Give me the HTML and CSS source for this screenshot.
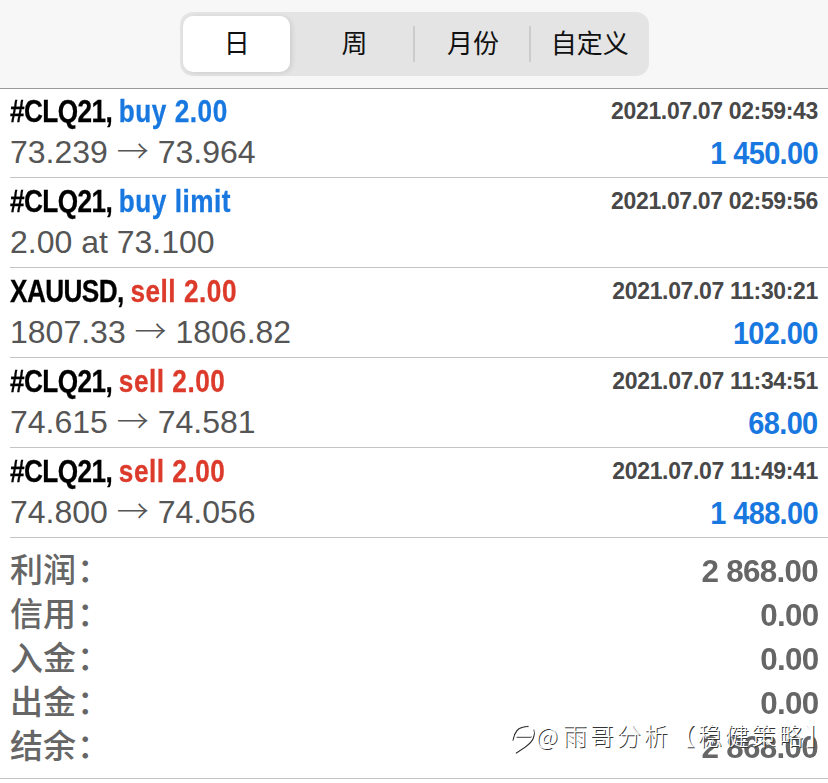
FILE: index.html
```html
<!DOCTYPE html>
<html lang="zh">
<head>
<meta charset="utf-8">
<title>History</title>
<link rel="stylesheet" href="styles.css">
</head>
<body>
<div class="page">
  <header class="topbar">
    <div class="segments">
      <div class="seg seg-day active">日</div>
      <div class="seg seg-week">周</div>
      <div class="seg seg-month">月份</div>
      <div class="seg seg-custom">自定义</div>
    </div>
  </header>
  <main class="list">
    <div class="row">
      <div class="line1"><span class="sym">#CLQ21, <span class="blue">buy 2.00</span></span><span class="time">2021.07.07 02:59:43</span></div>
      <div class="line2"><span class="price">73.239 <span class="arrow">→</span> 73.964</span><span class="pl">1 450.00</span></div>
    </div>
    <div class="row">
      <div class="line1"><span class="sym">#CLQ21, <span class="blue">buy limit</span></span><span class="time">2021.07.07 02:59:56</span></div>
      <div class="line2"><span class="price">2.00 at 73.100</span></div>
    </div>
    <div class="row">
      <div class="line1"><span class="sym">XAUUSD, <span class="red">sell 2.00</span></span><span class="time">2021.07.07 11:30:21</span></div>
      <div class="line2"><span class="price">1807.33 <span class="arrow">→</span> 1806.82</span><span class="pl">102.00</span></div>
    </div>
    <div class="row">
      <div class="line1"><span class="sym">#CLQ21, <span class="red">sell 2.00</span></span><span class="time">2021.07.07 11:34:51</span></div>
      <div class="line2"><span class="price">74.615 <span class="arrow">→</span> 74.581</span><span class="pl">68.00</span></div>
    </div>
    <div class="row">
      <div class="line1"><span class="sym">#CLQ21, <span class="red">sell 2.00</span></span><span class="time">2021.07.07 11:49:41</span></div>
      <div class="line2"><span class="price">74.800 <span class="arrow">→</span> 74.056</span><span class="pl">1 488.00</span></div>
    </div>
    <section class="summary">
      <div class="sum"><span class="label">利润<span class="colon">：</span></span><span class="value">2 868.00</span></div>
      <div class="sum"><span class="label">信用<span class="colon">：</span></span><span class="value">0.00</span></div>
      <div class="sum"><span class="label">入金<span class="colon">：</span></span><span class="value">0.00</span></div>
      <div class="sum"><span class="label">出金<span class="colon">：</span></span><span class="value">0.00</span></div>
      <div class="sum"><span class="label">结余<span class="colon">：</span></span><span class="value">2 868.00</span></div>
    </section>
  </main>
  <div class="watermark">
    <svg class="wm-icon" width="28" height="32" viewBox="0 0 28 32" fill="none" stroke="#fff" stroke-width="1.3" stroke-linecap="round">
      <path d="M4 20C5 14 8 8 14 7c2-.4 4-.6 5-.5"/>
      <path d="M8 17h15"/>
      <path d="M24.7 10c1 3 1 5-.4 8-1 3-4 6-8 9-3 2-6 4-9 6"/>
    </svg>
    <span class="wm-text"><span class="wm-at">@</span>雨哥分析【稳健策略<span class="wm-end">】</span></span>
  </div>
</div>
</body>
</html>
```
FILE: styles.css
```css
* { box-sizing: border-box; }
html, body { margin: 0; padding: 0; background: #fff; }
body { font-family: "Liberation Sans", "Noto Sans CJK SC", sans-serif; }
.page { position: relative; width: 828px; height: 783px; overflow: hidden; }

.topbar { height: 89px; background: #f7f7f7; border-bottom: 1px solid #999; padding: 12px 0 0 180px; }
.segments { display: flex; align-items: center; width: 469px; height: 64px; padding: 0 3px; background: #e4e4e4; border-radius: 13px; }
.seg { display: flex; align-items: center; justify-content: center; height: 36px; padding-bottom: 5px; font: 400 26px "Noto Sans CJK SC", sans-serif; color: #111; }
.seg-day { width: 108px; height: 56px; background: #fff; border-radius: 10px; box-shadow: 2px 1px 5px rgba(0,0,0,.1); }
.seg-week { width: 125px; padding-left: 6px; border-right: 2px solid #ccc; }
.seg-month { width: 117px; padding-left: 3px; border-right: 2px solid #ccc; }
.seg-custom { width: 116px; padding-left: 3px; }

.row { height: 90px; padding: 1px 10px 0 0; margin-left: 10px; border-bottom: 1px solid #c4c4c4; }
.row:first-child { height: 89px; padding-top: 0; }
.line1, .line2 { display: flex; justify-content: space-between; }
.line1 { height: 45px; align-items: center; }
.line2 { height: 43px; align-items: baseline; }
.sym { display: inline-block; font-weight: 700; font-size: 31px; white-space: nowrap; letter-spacing: -.7px; color: #000; -webkit-text-stroke: .3px currentColor; transform: scaleX(.845); transform-origin: left center; }
.blue, .red { letter-spacing: .6px; }
.blue { color: #1878e0; }
.red { color: #dc3a2a; }
.time { font-weight: 700; font-size: 23px; letter-spacing: -.35px; color: #484848; }
.price { font-size: 32px; color: #555; }
.arrow { font-family: "Noto Sans CJK SC", sans-serif; font-weight: 300; line-height: 0; }
.pl { display: inline-block; font-weight: 700; font-size: 32px; white-space: nowrap; letter-spacing: -.7px; color: #1878e0; transform: translateY(1px) scaleX(.905); transform-origin: right center; }

.summary { padding: 11px 10px 0; height: 241px; border-bottom: 1px solid #c4c4c4; }
.sum { display: flex; justify-content: space-between; align-items: center; height: 44px; }
.label { padding-bottom: 6px; font: 500 33px "Noto Sans CJK SC", sans-serif; color: #666; line-height: 44px; }
.colon { margin-left: 1px; font-family: "Noto Sans CJK TC", sans-serif; font-weight: 500; }
.value { display: inline-block; font-weight: 700; font-size: 32px; white-space: nowrap; letter-spacing: -.7px; color: #666; transform: scaleX(.98); transform-origin: right center; }

.watermark { position: absolute; left: 508px; top: 717px; display: flex; align-items: center; white-space: nowrap; text-shadow: 1px 1px 0 #333; }
.wm-icon { overflow: visible; filter: drop-shadow(1px 1px 0 #333); }
.wm-text { font: 300 24px "Noto Sans CJK SC", sans-serif; letter-spacing: 3px; color: #fff; }
.wm-at { margin-right: 2px; }
.wm-end { letter-spacing: 0; font-feature-settings: "palt"; }
```
